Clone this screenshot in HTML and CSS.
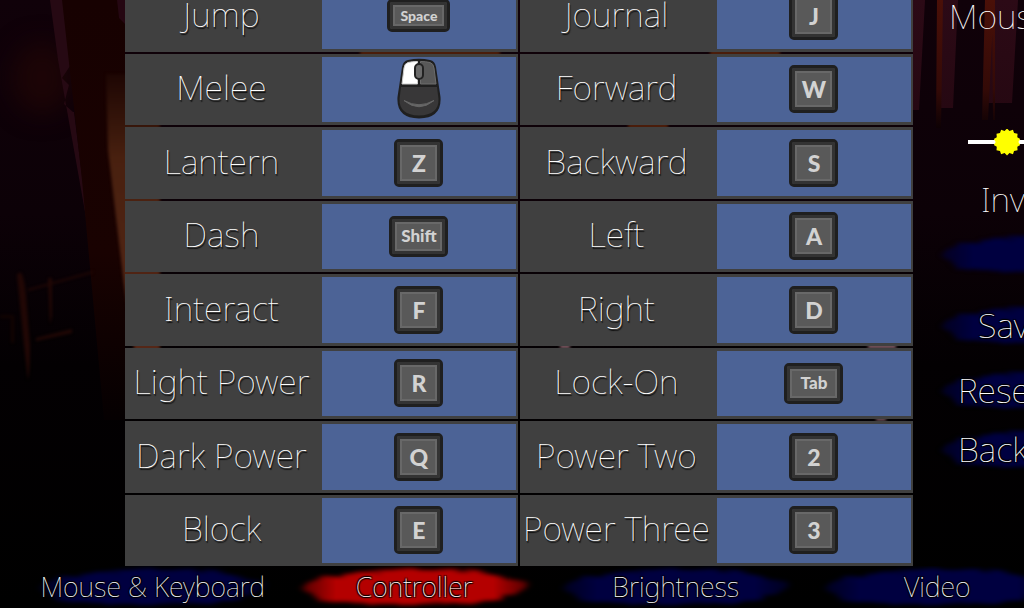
FILE: index.html
```html
<!DOCTYPE html>
<html lang="en">
<head>
<meta charset="utf-8">
<title>Controls</title>
<link rel="stylesheet" href="styles.css">
</head>
<body>
<svg class="backdrop" viewBox="0 0 1024 608" preserveAspectRatio="none" color-interpolation-filters="sRGB" aria-hidden="true">
  <defs>
    <linearGradient id="night" x1="0" y1="0" x2="0" y2="1">
      <stop offset="0" stop-color="#100109"/><stop offset=".35" stop-color="#0c0107"/>
      <stop offset=".6" stop-color="#030002"/><stop offset="1" stop-color="#000"/>
    </linearGradient>
    <linearGradient id="trunk" x1="0" y1="0" x2="0" y2="1">
      <stop offset="0" stop-color="#170101"/><stop offset=".6" stop-color="#190201"/><stop offset="1" stop-color="#050001"/>
    </linearGradient>
    <linearGradient id="lit" x1="0" y1="0" x2="0" y2="1">
      <stop offset="0" stop-color="#1d0603"/><stop offset=".3" stop-color="#48200f"/><stop offset="1" stop-color="#552717"/>
    </linearGradient>
    <linearGradient id="curtain" x1="0" y1="0" x2="0" y2="1">
      <stop offset="0" stop-color="#2c0a16"/><stop offset="1" stop-color="#260812"/>
    </linearGradient>
    <linearGradient id="ember" x1="0" y1="0" x2="0" y2="1">
      <stop offset="0" stop-color="#4a1008"/><stop offset=".7" stop-color="#330a07"/><stop offset="1" stop-color="#0d0104"/>
    </linearGradient>
    <filter id="soft" x="-50%" y="-20%" width="200%" height="140%"><feGaussianBlur stdDeviation="1.500"/></filter>
    <filter id="haze" x="-50%" y="-50%" width="200%" height="200%"><feGaussianBlur stdDeviation="12"/></filter>
  </defs>
  <rect width="1024" height="608" fill="url(#night)"/>
  <ellipse cx="42" cy="78" rx="30" ry="36" fill="#1c0406" filter="url(#haze)"/>
  <path d="M50 0H64L70 66L62 78L69 85L64 104L73 112H74L90 240L58 60Z" fill="#260913"/>
  <path d="M62 0H125V420H104L82 180Z" fill="url(#trunk)"/>
  <path d="M117 0h8v24l-6-6z" fill="#250712"/>
  <path d="M106 74H160V355H135L124 285L108 150Z" fill="url(#lit)" filter="url(#soft)"/>
  <g fill="#210705" filter="url(#soft)">
    <path d="M17 275q6-10 9 20l4 50q0 25-2 35l-4-35z"/>
    <path d="M28 289L93 271v2L28 291zM48 278h4v38l-2 8zM36 338l36-9v4l-36 8z"/>
    <path d="M0 315h14v28h-3v-25H0z" fill="#120302"/>
  </g>
  <g fill="#4a1d0b" filter="url(#soft)">
    <path d="M360 48h140v9H360zM710 48h70v9h-70zM628 122h40v9h-40z"/>
    <path d="M560 343h10v6h-10zM868 343h28v6h-28zM876 417h10v4h-10z" fill="#705058"/>
  </g>
  <path d="M913 0H925L919 110H913ZM941 0H958L953 108H940ZM990 0H1018L1012 103H986Z" fill="url(#curtain)"/>
  <path d="M937 0h6l-2 128h-5zM985 0h9l-6 120h-6zM992 0h3v120h-2z" fill="url(#ember)"/>
</svg>

<svg class="defs" aria-hidden="true">
  <defs>
    <filter id="feather" x="-15%" y="-40%" width="130%" height="180%" color-interpolation-filters="sRGB">
      <feTurbulence type="fractalNoise" baseFrequency=".03 .3" numOctaves="2" seed="4" result="n"/>
      <feDisplacementMap in="SourceGraphic" in2="n" scale="8" xChannelSelector="R" yChannelSelector="A"/>
      <feGaussianBlur stdDeviation="3 2"/>
    </filter>
    <linearGradient id="fade" x1="0" x2="1">
      <stop offset="0" stop-color="#fff" stop-opacity=".2"/><stop offset=".2" stop-color="#fff"/>
      <stop offset=".8" stop-color="#fff"/><stop offset="1" stop-color="#fff" stop-opacity=".2"/>
    </linearGradient>
    <mask id="ends" maskUnits="userSpaceOnUse" x="0" y="0" width="260" height="42"><rect width="260" height="42" fill="url(#fade)"/></mask>
    <symbol id="brush" viewBox="0 0 260 42" preserveAspectRatio="none">
      <g mask="url(#ends)"><path filter="url(#feather)" d="M16 22Q28 10 62 8L112 4Q150 1 190 6Q225 10 246 19Q230 31 200 35Q170 38 120 38Q60 38 34 33Z"/></g>
    </symbol>
    <symbol id="mouse" viewBox="0 0 46 62">
      <path d="M12 2Q23-.5 34 2Q39 3 40 9L44.500 39Q46 60 23 60.500Q0 60 1.500 39L6 9Q7 3 12 2Z" fill="#1f1f1f"/>
      <path d="M5 29H41L42.500 41Q43 57 23 57.500Q3 57 3.500 41Z" fill="#383738"/>
      <path d="M12 4.500Q16 3.500 21.500 3.500V26H6L8 10Q8.500 5.500 12 4.500Z" fill="#fff" stroke="#ccc"/>
      <path d="M24.500 3.500Q30 3.500 34 4.500Q37.500 5.500 38 10L40 26H24.500Z" fill="#585858" stroke="#6c6c6c"/>
      <rect x="19" y="6" width="8" height="15" rx="4" fill="#6b6b6b" stroke="#222" stroke-width="2"/>
      <path d="M8 42.500Q23 55 38 42.500Q23 51 8 42.500Z" fill="#666" stroke="#666"/>
    </symbol>
  </defs>
</svg>

<main class="screen">
  <section class="bindings" aria-label="Key bindings">
    <div class="column">
      <div class="row"><span class="action">Jump</span><button class="bind"><kbd class="key small">Space</kbd></button></div>
      <div class="row"><span class="action">Melee</span><button class="bind" aria-label="Left mouse button"><svg class="mouse"><use href="#mouse"/></svg></button></div>
      <div class="row"><span class="action">Lantern</span><button class="bind"><kbd class="key">Z</kbd></button></div>
      <div class="row"><span class="action">Dash</span><button class="bind"><kbd class="key wide">Shift</kbd></button></div>
      <div class="row"><span class="action">Interact</span><button class="bind"><kbd class="key">F</kbd></button></div>
      <div class="row"><span class="action">Light Power</span><button class="bind"><kbd class="key">R</kbd></button></div>
      <div class="row"><span class="action">Dark Power</span><button class="bind"><kbd class="key">Q</kbd></button></div>
      <div class="row"><span class="action">Block</span><button class="bind"><kbd class="key">E</kbd></button></div>
    </div>
    <div class="column">
      <div class="row"><span class="action">Journal</span><button class="bind"><kbd class="key">J</kbd></button></div>
      <div class="row"><span class="action">Forward</span><button class="bind"><kbd class="key">W</kbd></button></div>
      <div class="row"><span class="action">Backward</span><button class="bind"><kbd class="key">S</kbd></button></div>
      <div class="row"><span class="action">Left</span><button class="bind"><kbd class="key">A</kbd></button></div>
      <div class="row"><span class="action">Right</span><button class="bind"><kbd class="key">D</kbd></button></div>
      <div class="row"><span class="action">Lock-On</span><button class="bind"><kbd class="key wide">Tab</kbd></button></div>
      <div class="row"><span class="action">Power Two</span><button class="bind"><kbd class="key">2</kbd></button></div>
      <div class="row"><span class="action">Power Three</span><button class="bind"><kbd class="key">3</kbd></button></div>
    </div>
  </section>

  <aside class="options">
    <label class="caption" for="sens">Mouse</label>
    <input class="slider" id="sens" type="range" min="0" max="100" value="12">
    <label class="caption invert" for="inv">Inve</label>
    <button class="brushed toggle" id="inv"><svg class="stroke"><use href="#brush"/></svg></button>
    <button class="brushed save"><svg class="stroke"><use href="#brush"/></svg><span>Save</span></button>
    <button class="brushed reset"><svg class="stroke"><use href="#brush"/></svg><span>Reset</span></button>
    <button class="brushed back"><svg class="stroke"><use href="#brush"/></svg><span>Back</span></button>
  </aside>
</main>

<nav class="tabs">
  <button class="brushed tab"><svg class="stroke"><use href="#brush"/></svg><span>Mouse &amp; Keyboard</span></button>
  <button class="brushed tab active" aria-current="page"><svg class="stroke"><use href="#brush"/></svg><span>Controller</span></button>
  <button class="brushed tab"><svg class="stroke"><use href="#brush"/></svg><span>Brightness</span></button>
  <button class="brushed tab"><svg class="stroke"><use href="#brush"/></svg><span>Video</span></button>
</nav>
</body>
</html>
```
FILE: styles.css
```css
* { box-sizing: border-box; }

body {
  margin: 0;
  height: 100vh;
  display: flex;
  flex-direction: column;
  overflow: hidden;
  background: #000;
  color: #fff;
  font-family: "Noto Sans", "Open Sans", sans-serif;
  font-weight: 100;
  font-size: 34px;
  line-height: 32px;
}

button {
  margin: 0;
  padding: 0;
  border: 0;
  background: none;
  color: inherit;
  font: inherit;
  cursor: pointer;
}

.backdrop {
  position: absolute;
  inset: 0;
  z-index: -1;
  width: 100%;
  height: 100%;
}

.defs {
  position: absolute;
  width: 0;
  height: 0;
}

.screen {
  flex: 1;
  min-height: 0;
  display: grid;
  grid-template-columns: 788fr 111fr;
  grid-template-rows: 100%;
  padding-left: 12.2%;
  overflow: hidden;
}

.bindings {
  align-self: end;
  min-height: calc(100vh - 22px);
  display: grid;
  grid-template-columns: 1fr 1fr;
  gap: 2px;
}

.column {
  display: grid;
  grid-auto-rows: 1fr;
  gap: 2px;
}

.row {
  display: grid;
  grid-template-columns: 197fr 194fr;
  padding: 3px 2px 3px 0;
  background: #404040;
}

.action {
  align-self: center;
  justify-self: center;
  padding: 0 4px 4px 0;
  white-space: nowrap;
  text-shadow: 1px 2px 1px #0c0c0c;
}

.bind {
  display: flex;
  align-items: center;
  justify-content: center;
  background: #4c6396;
}

.key {
  display: flex;
  align-items: center;
  justify-content: center;
  width: 49px;
  height: 48px;
  border: 3px solid #1f1f1f;
  border-radius: 5px;
  background: #595959;
  box-shadow: inset 0 0 0 3px #333, inset 0 0 0 5px #686868;
  color: #d2d2d2;
  font: 900 23px/32px Lato, sans-serif;
}

.key.wide,
.key.small {
  width: 59px;
  height: 41px;
  font-size: 17px;
}

.key.small {
  width: 63px;
  height: 33px;
  font-size: 14px;
}

.mouse {
  width: 46px;
  height: 62px;
}

.options {
  display: flex;
  flex-direction: column;
  padding-left: 24px;
  white-space: nowrap;
  overflow: hidden;
}

.caption {
  margin-left: 12px;
}

.slider {
  appearance: none;
  width: 240px;
  height: 32px;
  margin: 94px 0 25px 31px;
  background: linear-gradient(#fff, #fff) center / 100% 4px no-repeat;
}

.slider::-webkit-slider-thumb {
  appearance: none;
  width: 27px;
  height: 27px;
  background: #ffff00;
  clip-path: polygon(50% 0, 59% 9%, 72% 5%, 76% 17%, 89% 19%, 88% 32%, 99% 39%, 92% 50%, 99% 61%, 88% 68%, 89% 81%, 76% 83%, 72% 95%, 59% 91%, 50% 100%, 41% 91%, 28% 95%, 24% 83%, 11% 81%, 12% 68%, 1% 61%, 8% 50%, 1% 39%, 12% 32%, 11% 19%, 24% 17%, 28% 5%, 41% 9%);
}

.invert { margin-left: 44px; }

.brushed {
  position: relative;
  isolation: isolate;
  text-shadow: 1px 1px 1px #000, -1px -1px 1px #000, 1px -1px 1px #000, -1px 1px 1px #000;
}

.stroke {
  position: absolute;
  inset: 0;
  z-index: -1;
  width: 100%;
  height: 100%;
  fill: #000040;
}

.options .brushed {
  width: 240px;
  height: 44px;
  flex: none;
  text-align: left;
}

.options .stroke { left: -12px; }

.options .toggle { margin-top: 17px; }
.save { margin-top: 27px; padding-left: 41px; }
.reset { margin-top: 21px; padding-left: 21px; }
.back { margin-top: 15px; padding-left: 21px; }

.tabs {
  display: grid;
  grid-auto-flow: column;
  grid-auto-columns: 26.1%;
  height: 42px;
  padding-left: 22px;
  overflow: hidden;
  font-size: 27px;
}

.active .stroke { fill: #b40000; }
```
